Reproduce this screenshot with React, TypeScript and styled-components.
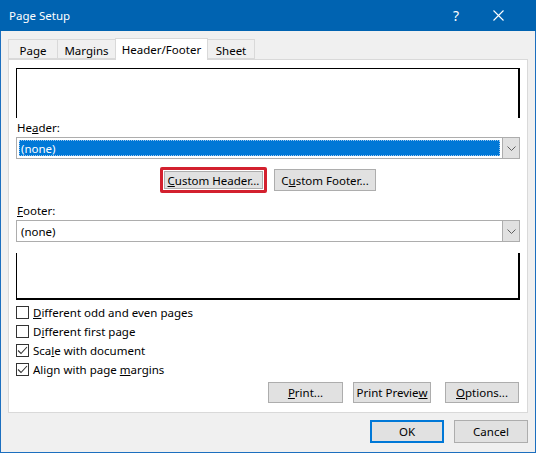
import styled, { createGlobalStyle } from "styled-components"

const GlobalStyle = createGlobalStyle`
    html, body {
        margin: 0;
        padding: 0;
        background: #ffffff;
    }
    * {
        box-sizing: border-box;
    }
    body {
        font-family: "Noto Sans", "Open Sans", sans-serif;
        font-size: 11.5px;
        color: #000000;
    }
`

type Opt = { before: string; k: string; after: string }

const checks: { label: Opt; checked: boolean }[] = [
    { label: { before: "", k: "D", after: "ifferent odd and even pages" }, checked: false },
    { label: { before: "D", k: "i", after: "fferent first page" }, checked: false },
    { label: { before: "Sca", k: "l", after: "e with document" }, checked: true },
    { label: { before: "Align with page ", k: "m", after: "argins" }, checked: true },
]

function Access({ before, k, after }: Opt) {
    return <>{before}<u>{k}</u>{after}</>
}

export default function App() {
    return (
        <>
            <GlobalStyle />
            <Window>
                <TitleBar>
                    <Title>Page Setup</Title>
                    <TitleIcons>
                        <Help>?</Help>
                        <svg width="11" height="11" viewBox="0 0 11 11">
                            <path d="M0.5 0.5 L10.5 10.5 M10.5 0.5 L0.5 10.5" stroke="#fff" strokeWidth="1.1" />
                        </svg>
                    </TitleIcons>
                </TitleBar>
                <Body>
                    <Tabs>
                        <Tab $w={50}>Page</Tab>
                        <Tab $w={59}>Margins</Tab>
                        <Tab $w={93} $active>Header/Footer</Tab>
                        <Tab $w={48}>Sheet</Tab>
                    </Tabs>
                    <Panel>
                        <PreviewBox $top />
                        <FieldLabel>He<u>a</u>der:</FieldLabel>
                        <Select>
                            <SelectValue $selected>(none)</SelectValue>
                            <DropButton><Chevron /></DropButton>
                        </Select>
                        <CustomRow>
                            <Highlight>
                                <Button $w={99} $h={18}><u>C</u>ustom Header...</Button>
                            </Highlight>
                            <Button $w={102} $h={22}>C<u>u</u>stom Footer...</Button>
                        </CustomRow>
                        <FieldLabel $gap={10}><u>F</u>ooter:</FieldLabel>
                        <Select>
                            <SelectValue>(none)</SelectValue>
                            <DropButton><Chevron /></DropButton>
                        </Select>
                        <PreviewBox />
                        <CheckList>
                            {checks.map((c, i) => (
                                <CheckRow key={i}>
                                    <Box>
                                        {c.checked && (
                                            <svg width="11" height="11" viewBox="0 0 11 11">
                                                <path d="M1 5.5 L4 8.5 L10 2" fill="none" stroke="#333" strokeWidth="1.1" />
                                            </svg>
                                        )}
                                    </Box>
                                    <span><Access {...c.label} /></span>
                                </CheckRow>
                            ))}
                        </CheckList>
                        <PrintRow>
                            <Button $w={75} $h={21}><u>P</u>rint...</Button>
                            <Button $w={78} $h={21}>Print Previe<u>w</u></Button>
                            <Button $w={74} $h={21} $ml={4}><u>O</u>ptions...</Button>
                        </PrintRow>
                    </Panel>
                    <Footer>
                        <Button $w={74} $h={23} $default>OK</Button>
                        <Button $w={74} $h={23}>Cancel</Button>
                    </Footer>
                </Body>
            </Window>
        </>
    )
}

function Chevron() {
    return (
        <svg width="9" height="5" viewBox="0 0 9 5">
            <path d="M0.5 0.5 L4.5 4.5 L8.5 0.5" fill="none" stroke="#606060" strokeWidth="1" />
        </svg>
    )
}

const Window = styled.div`
    width: 536px;
    height: 453px;
    border: 1px solid #1c6fbf;
    border-top: none;
    background: #f0f0f0;
    display: flex;
    flex-direction: column;
`

const TitleBar = styled.div`
    height: 31px;
    margin: 0 -1px;
    background: #0063b1;
    color: #ffffff;
    display: flex;
    align-items: center;
    justify-content: space-between;
    padding: 0 32px 0 9px;
    flex: 0 0 auto;
`

const Title = styled.div`
    font-size: 11.5px;
    padding-bottom: 1px;
`

const TitleIcons = styled.div`
    display: flex;
    align-items: center;
    gap: 34px;
`

const Help = styled.span`
    font-size: 14px;
`

const Body = styled.div`
    flex: 1;
    padding: 7px 7px 0 7px;
    display: flex;
    flex-direction: column;
`

const Tabs = styled.div`
    display: flex;
    align-items: flex-end;
    height: 21px;
    position: relative;
    z-index: 1;
`

const Tab = styled.div<{ $w: number; $active?: boolean }>`
    width: ${p => p.$w}px;
    height: ${p => (p.$active ? 22 : 20)}px;
    margin-bottom: ${p => (p.$active ? -1 : 0)}px;
    margin-left: -1px;
    display: flex;
    align-items: center;
    justify-content: center;
    padding-top: ${p => (p.$active ? 0 : 3)}px;
    background: ${p => (p.$active ? "#ffffff" : "#f0f0f0")};
    border: 1px solid #d9d9d9;
    border-bottom: ${p => (p.$active ? "none" : "1px solid #d9d9d9")};
    &:first-child {
        margin-left: 0;
    }
`

const Panel = styled.div`
    height: 354px;
    background: #ffffff;
    border: 1px solid #d9d9d9;
    padding: 0 7px;
    display: flex;
    flex-direction: column;
`

const PreviewBox = styled.div<{ $top?: boolean }>`
    height: ${p => (p.$top ? 50 : 47)}px;
    margin-top: ${p => (p.$top ? 8 : 11)}px;
    border-left: 1px solid #000;
    border-right: 2px solid #000;
    border-top: ${p => (p.$top ? "1px solid #000" : "none")};
    border-bottom: ${p => (p.$top ? "none" : "2px solid #000")};
`

const FieldLabel = styled.div<{ $gap?: number }>`
    margin-top: ${p => p.$gap ?? 2}px;
    line-height: 16px;
    height: 16px;
    padding-left: 1px;
`

const Select = styled.div`
    margin-top: 1px;
    height: 22px;
    border: 1px solid #adadad;
    background: #ffffff;
    display: flex;
`

const SelectValue = styled.div<{ $selected?: boolean }>`
    flex: 1;
    display: flex;
    align-items: center;
    margin: ${p => (p.$selected ? "2px" : "0")};
    padding-left: ${p => (p.$selected ? 2 : 4)}px;
    background: ${p => (p.$selected ? "#0078d7" : "transparent")};
    color: ${p => (p.$selected ? "#ffffff" : "#000000")};
    outline: ${p => (p.$selected ? "1px dotted #9cc8f0" : "none")};
    outline-offset: -1px;
`

const DropButton = styled.div`
    width: 17px;
    border-left: 1px solid #adadad;
    background: #e1e1e1;
    display: flex;
    align-items: center;
    justify-content: center;
`

const CustomRow = styled.div`
    margin-top: 8px;
    display: flex;
    justify-content: center;
    align-items: center;
    gap: 7px;
`

const Highlight = styled.div`
    border: 3px solid #d3202e;
    border-radius: 2px;
    padding: 1px;
    display: flex;
`

const Button = styled.div<{ $w: number; $h: number; $default?: boolean; $ml?: number }>`
    width: ${p => p.$w}px;
    height: ${p => p.$h}px;
    margin-left: ${p => p.$ml ?? 0}px;
    background: #e1e1e1;
    border: ${p => (p.$default ? "2px solid #0078d7" : "1px solid #adadad")};
    display: flex;
    align-items: center;
    justify-content: center;
    white-space: nowrap;
`

const CheckList = styled.div`
    margin-top: 3px;
    display: flex;
    flex-direction: column;
`

const CheckRow = styled.div`
    height: 19px;
    display: flex;
    align-items: center;
    gap: 4px;
`

const Box = styled.div`
    width: 13px;
    height: 13px;
    border: 1px solid #333333;
    background: #ffffff;
    display: flex;
    align-items: center;
    justify-content: center;
`

const PrintRow = styled.div`
    margin-top: 3px;
    display: flex;
    justify-content: flex-end;
    gap: 10px;
    padding-right: 1px;
`

const Footer = styled.div`
    margin-top: 7px;
    display: flex;
    justify-content: flex-end;
    gap: 10px;
`
